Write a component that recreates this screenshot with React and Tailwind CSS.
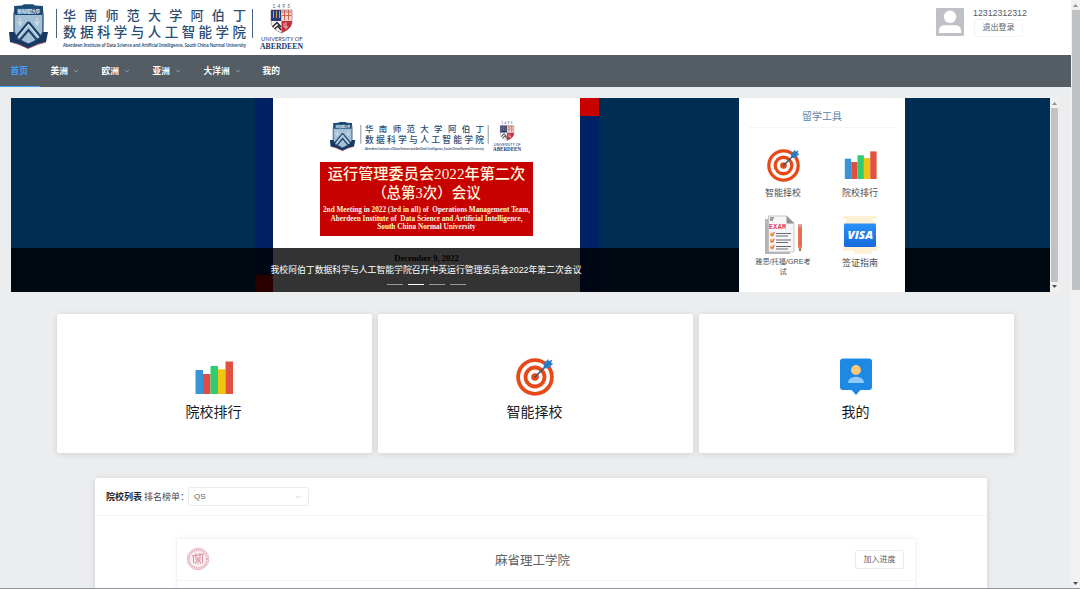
import React from "react";
import { ChevronDown } from "lucide-react";

function Crest() {
  return (
    <g>
      <path d="M9 32 L14 32 L18 39 L28 44 L38 39 L43 32 L48 32 L46 42 L38 44 L28 48.500 L18 44 L10 42 Z" fill="#17395f" />
      <path d="M11 42 L19 44.500 L28 48.500 L38 44.500 L46 42" fill="none" stroke="#a43a4a" strokeWidth="0.7" />
      <path d="M15.500 7 H42 L43 14 V31 C42 37 36 41 28.500 44 C21 41 15 37 14 31 V14 Z" fill="#a3c0d6" stroke="#1c4168" strokeWidth="1.200" />
      <path d="M14 6 L22 5.500 L24 4.300 H33 L35 5.500 L43 6 L42 15 H15 Z" fill="#1b4a75" />
      <text x="17" y="13.200" fontSize="4.500" textLength="23" fill="#dbe8f2" fontWeight="700">華南師範大學</text>
      <path d="M28.500 22 L41 37 M28.500 22 L16 37 M20 40 L28.500 30 L37 40" fill="none" stroke="#1c4168" strokeWidth="2" />
      <path d="M28.500 24.500 L39 38 M28.500 24.500 L18 38 M20 18 V26 M17 21.500 L20 24 L23 21.500 M37 18 V26 M34 21.500 L37 24 L40 21.500" fill="none" stroke="#e2edf4" strokeWidth="0.9" />
    </g>
  );
}

function Shield() {
  return (
    <g>
      <path d="M271 10 H281.500 V21 H271 Z" fill="#253a78" />
      <path d="M281.500 10 H292 V21 H281.500 Z" fill="#f1d9cf" />
      <path d="M271 21 H281.500 V33 C275 30 271 27 271 21 Z" fill="#f4f2ef" />
      <path d="M281.500 21 H292 C292 27 288 30 281.500 33 Z" fill="#c42d3c" />
      <path d="M273.500 11 V18 M276.500 11 V18 M279.500 11 V18" stroke="#d3a34c" strokeWidth="1" />
      <path d="M282 12 H291.500 M282 15.500 H291.500 M284.500 10 V20 M288.500 10 V20" stroke="#cf5a45" strokeWidth="0.9" />
      <path d="M272.500 27 L277 22.500 L281 27 M274.500 29 L278 26 L281 30" fill="none" stroke="#26242b" strokeWidth="1.500" />
      <path d="M284 23 V27 H288 M286 22 V29" stroke="#f5d5d2" strokeWidth="0.8" fill="none" />
      <path d="M271 10 H292 V21 C292 27 288 30 281.500 33 C275 30 271 27 271 21 Z" fill="none" stroke="#7c4053" strokeWidth="0.5" />
    </g>
  );
}

function Brand({ className }) {
  return (
    <svg viewBox="6 0 300 52" className={className} fontFamily="'Noto Sans CJK SC', sans-serif">
      <Crest />
      <path d="M56.500 9 V38 M252.500 9 V38" stroke="#36506e" strokeWidth="0.9" />
      <g fill="#2a4d72" fontWeight="500">
        <text x="63" y="20.200" fontSize="13" textLength="183">华南师范大学阿伯丁</text>
        <text x="63" y="37.200" fontSize="13.500" textLength="183">数据科学与人工智能学院</text>
      </g>
      <text x="63" y="46.800" fontSize="4.300" fontFamily="'Noto Sans', sans-serif" fontWeight="600" textLength="183" fill="#2a4d72">
        Aberdeen Institute of Data Science and Artificial Intelligence, South China Normal University
      </text>
      <Shield />
      <text x="272.500" y="8.300" fontSize="4.800" fontFamily="Lato, sans-serif" textLength="17.500" fill="#44506e">1495</text>
      <text x="261" y="41" fontSize="5.400" fontFamily="Lato, sans-serif" textLength="41.500" lengthAdjust="spacingAndGlyphs" fill="#2b3d73">UNIVERSITY OF</text>
      <text x="260" y="48.500" fontSize="8.600" fontFamily="'Liberation Serif', serif" fontWeight="700" textLength="43" lengthAdjust="spacingAndGlyphs" fill="#243870">ABERDEEN</text>
    </svg>
  );
}

function TargetIcon({ className }) {
  return (
    <svg viewBox="0 0 38 38" className={className}>
      <circle cx="19" cy="19" r="18.800" fill="#e64a19" />
      <circle cx="19" cy="19" r="15" fill="#fff" />
      <circle cx="19" cy="19" r="11.400" fill="#e64a19" />
      <circle cx="19" cy="19" r="7.600" fill="#fff" />
      <circle cx="19" cy="19" r="3.800" fill="#e64a19" />
      <path d="M18.500 19.500 L31 7" stroke="#37566b" strokeWidth="1.600" />
      <path d="M27.500 10.500 L28 5 L32.500 1 L32.800 3.200 L36.500 1.500 L35 5 L37.200 5.500 L33 10 Z" fill="#2f7fc6" />
      <path d="M28 10 L35 3" stroke="#1f5f9f" strokeWidth="0.8" />
    </svg>
  );
}

function BarsIcon({ className }) {
  return (
    <svg viewBox="0 0 38 33" className={className}>
      <path d="M0.500 9 H8 V33 H0.500 Z" fill="#3994d6" />
      <path d="M8 13 H15.500 V33 H8 Z" fill="#e24d42" />
      <path d="M15.500 5 H23 V33 H15.500 Z" fill="#2fcc71" />
      <path d="M23 8.300 H30.500 V33 H23 Z" fill="#f1c40f" />
      <path d="M30.500 0.500 H38 V33 H30.500 Z" fill="#e0523f" />
    </svg>
  );
}

function ExamIcon({ className }) {
  return (
    <svg viewBox="0 0 38 40" className={className}>
      <path d="M1 4 H26 V39 H1 Z" fill="#b5b5b7" />
      <path d="M4.500 1 H23 L30 8 V37 H4.500 Z" fill="#f6f6f8" stroke="#b9b9bd" strokeWidth="0.8" />
      <path d="M22.500 1 V8.500 H30 Z" fill="#8e8e93" />
      <path d="M6 3 H10 M6 5 H9" stroke="#333" strokeWidth="0.9" />
      <text x="5" y="13.500" fontSize="6.500" fontFamily="'Liberation Mono', monospace" fontWeight="700" textLength="17" fill="#e23b52">EXAM</text>
      <path d="M6 17.500 h4 v4 h-4 Z M6 24 h4 v4 h-4 Z M6 30.500 h4 v4 h-4 Z" fill="#f6bd79" />
      <path d="M7 19 l1.200 1.500 l2.500 -3.500 M7 25.500 l1.200 1.500 l2.500 -3.500 M7 32 l1.200 1.500 l2.500 -3.500" fill="none" stroke="#df4c39" strokeWidth="0.9" />
      <path d="M12 18.500 H27 M12 21 H24 M12 25 H27 M12 27.500 H24 M12 31.500 H27 M12 34 H24" stroke="#686a76" strokeWidth="1" />
      <path d="M34 9 H38 V32 L36 36.500 L34 32 Z" fill="#e8785a" />
      <path d="M34 9 H38 V12 H34 Z" fill="#e79a96" />
      <path d="M36 13 V31" stroke="#c95535" strokeWidth="0.7" />
      <path d="M35.200 34.500 L36 36.500 L36.800 34.500 Z" fill="#423633" />
    </svg>
  );
}

function VisaIcon({ className }) {
  return (
    <svg viewBox="0 0 36 40" className={className}>
      <defs>
        <linearGradient id="visaBlue" x1="0" y1="0" x2="0" y2="1">
          <stop offset="0" stopColor="#2c91f6" />
          <stop offset="1" stopColor="#1769dc" />
        </linearGradient>
      </defs>
      <path d="M1 1 H35 V4 H31 V7 H35 V9 H1 V7 H4 V4 H1 Z M1 31 H35 V36 H30 V39 H12 V36 H1 Z" fill="#fdf0d5" />
      <rect x="2" y="8.500" width="32" height="23.500" rx="1.500" fill="url(#visaBlue)" />
      <text x="5.500" y="24" fontSize="10" fontFamily="'Open Sans', sans-serif" fontStyle="italic" fontWeight="800" textLength="25.500" lengthAdjust="spacingAndGlyphs" fill="#fff">VISA</text>
    </svg>
  );
}

function ContactIcon({ className }) {
  return (
    <svg viewBox="0 0 32 38" className={className}>
      <path d="M3 0.500 H29 Q32 0.500 32 3.500 V29 Q32 32 29 32 H20.500 L16 37 L11.500 32 H3 Q0 32 0 29 V3.500 Q0 0.500 3 0.500 Z" fill="#1e88e5" />
      <circle cx="16" cy="12" r="4.900" fill="#ffc876" />
      <path d="M8 25 C8 16.500 24 16.500 24 25 Z" fill="#90caf9" />
    </svg>
  );
}

function Avatar() {
  return (
    <svg viewBox="0 0 28 28" className="h-7 w-7">
      <rect width="28" height="28" rx="1" fill="#c0c1c8" />
      <circle cx="14" cy="8.800" r="6.200" fill="#fff" />
      <path d="M3 25 V23 C3 18.500 6 17.300 9 17.300 H19 C22 17.300 25 18.500 25 23 V25 Z" fill="#fff" />
    </svg>
  );
}

function Seal() {
  return (
    <svg viewBox="0 0 24 24" className="mb-[2px] h-6 w-6">
      <circle cx="12" cy="12" r="10.800" fill="#faeef2" stroke="#e3adba" strokeWidth="0.8" />
      <circle cx="12" cy="12" r="9" fill="none" stroke="#e3adba" strokeWidth="1.800" strokeDasharray="1.200 0.7" />
      <path d="M6 9 L18 7 M7.500 9 V16 M16.500 8 V16 M10 6 V11 M14 6 V11 M9 12 H15 M12 10 V17 M9 17 L11 13 M15 17 L13 13" fill="none" stroke="#d78da0" strokeWidth="1" />
    </svg>
  );
}

function Arrow({ up }) {
  return (
    <svg viewBox="0 0 5 3" className="h-[3px] w-[5px]">
      <path d={up ? "M0 3 L2.500 0 L5 3 Z" : "M0 0 L2.500 3 L5 0 Z"} fill={up ? "#8d8f92" : "#4c4e51"} />
    </svg>
  );
}

const navItems = [
  { label: "首页", width: "w-10 text-[#409eff] border-b border-[#409eff]" },
  { label: "美洲", width: "w-[51px] text-white", menu: true },
  { label: "欧洲", width: "w-[51px] text-white", menu: true },
  { label: "亚洲", width: "w-[51px] text-white", menu: true },
  { label: "大洋洲", width: "w-[59px] text-white", menu: true },
  { label: "我的", width: "w-10 text-white" },
];

function Header() {
  return (
    <header className="flex h-[55px] shrink-0 justify-between bg-white">
      <Brand className="ml-1.5 h-[52px] w-[300px]" />
      <div className="flex w-[135px] gap-[9px] pt-2">
        <Avatar />
        <div className="flex flex-col items-start whitespace-nowrap">
          <span className="h-[10px] text-[8.8px] leading-[11px] text-[#55595f]">12312312312</span>
          <button className="mt-[1px] ml-px flex h-[18px] w-[49px] items-center justify-center rounded-[2px] border border-[#f3f3f5] text-[8px] text-[#606266]">退出登录</button>
        </div>
      </div>
    </header>
  );
}

function Nav() {
  return (
    <nav className="flex h-8 shrink-0 bg-[#545c64]">
      {navItems.map((item) => (
        <div key={item.label} className={"flex items-center pt-[2px] pl-[10.5px] text-[8.7px] font-bold whitespace-nowrap " + item.width}>
          {item.label}
          {item.menu && <ChevronDown className="mb-[3px] ml-1 h-2 w-2 text-[#a8adb2]" strokeWidth={2} />}
        </div>
      ))}
    </nav>
  );
}

function Slide() {
  return (
    <div className="flex h-full w-full bg-[#002d54]">
      <div className="w-[244px]" />
      <div className="flex w-[18px] flex-col bg-[#002163]">
        <div className="mt-auto h-[17px] bg-[#c70000]" />
      </div>
      <div className="flex w-[307px] flex-col items-center bg-white">
        <Brand className="mt-[21px] mr-[3px] h-[34px] w-[195px]" />
        <div className="mt-[9px] flex h-[74px] w-[213px] flex-col items-center bg-[#c70000] font-['Liberation_Serif','Noto_Sans_CJK_SC',serif] whitespace-nowrap text-[#fff6df]">
          <p className="mt-[2px] text-[15.2px] leading-5 font-medium">运行管理委员会2022年第二次</p>
          <p className="text-[14.5px] leading-[19px] font-medium">（总第3次）会议</p>
          <div className="mt-[3px] text-center text-[7.25px] leading-[8.5px] font-bold">
            <p>2nd Meeting in 2022 (3rd in all) of&nbsp; Operations Management Team,</p>
            <p>Aberdeen Institute of&nbsp; Data Science and Artificial Intelligence,</p>
            <p>South China Normal University</p>
          </div>
        </div>
        <p className="mt-[16px] font-['Liberation_Serif',serif] text-[8.5px] leading-3 font-bold text-black">December 9, 2022</p>
      </div>
      <div className="w-[19px] bg-[#002163]">
        <div className="h-[18px] bg-[#c70000]" />
      </div>
    </div>
  );
}

function Tool({ icon, label, small }) {
  return (
    <div className="flex h-[70px] flex-col items-center">
      <div className="flex h-10 items-center">{icon}</div>
      <span className={small ? "mt-0.5 w-[62px] text-center text-[7.2px] leading-[9.5px] text-[#4c4f54]" : "mt-[2px] text-[9px] leading-[13px] text-[#4c4f54]"}>{label}</span>
    </div>
  );
}

function ToolPanel() {
  return (
    <aside className="absolute top-0 left-[728px] h-full w-[166px] bg-white">
      <h2 className="mx-2.5 flex h-[30px] items-center justify-center border-b border-[#f5f5f7] pt-[7px] text-[10px] text-[#5b82b0]">留学工具</h2>
      <div className="mt-[17px] ml-[5.5px] grid grid-cols-[77px_77px]">
        <Tool icon={<TargetIcon className="h-[33px] w-[33px]" />} label="智能择校" />
        <Tool icon={<BarsIcon className="h-7 w-[33px]" />} label="院校排行" />
        <Tool icon={<ExamIcon className="h-10 w-[38px]" />} label={<>雅思/托福/GRE考<br />试</>} small />
        <Tool icon={<VisaIcon className="h-10 w-9" />} label="签证指南" />
      </div>
    </aside>
  );
}

function Carousel() {
  return (
    <section className="mt-[11px] ml-[11px] flex h-[194px] w-[1048px] shrink-0">
      <div className="relative w-[1039px] overflow-hidden">
        <Slide />
        <div className="absolute inset-x-0 bottom-0 flex h-[44px] flex-col items-center bg-black/80 pr-[209px] text-white">
          <p className="mt-[15px] text-[8.84px] leading-[14px] whitespace-nowrap">我校阿伯丁数据科学与人工智能学院召开中英运行管理委员会2022年第二次会议</p>
          <div className="mt-[7px] flex gap-[5px]">
            <i className="h-px w-4 bg-white/50" />
            <i className="h-px w-4 bg-white" />
            <i className="h-px w-4 bg-white/50" />
            <i className="h-px w-4 bg-white/50" />
          </div>
        </div>
        <ToolPanel />
      </div>
      <div className="flex w-[9px] flex-col items-center justify-between bg-[#f1f1f2] py-1">
        <Arrow up />
        <div className="my-[3px] w-[7px] flex-1 bg-[#c0c2c5]" />
        <Arrow />
      </div>
    </section>
  );
}

function Shortcut({ icon, label }) {
  return (
    <div className="flex flex-col items-center rounded-[2px] bg-white pt-[44px] pr-px shadow-[0_1px_6px_rgba(0,0,0,0.12)]">
      <div className="flex h-[38px] items-end">{icon}</div>
      <span className="mt-[6px] text-[14px] leading-5 text-[#16181b]">{label}</span>
    </div>
  );
}

function SchoolList() {
  return (
    <section className="mt-[25px] ml-[95px] w-[892px] flex-1 rounded-t-[2px] bg-white shadow-[0_1px_6px_rgba(0,0,0,0.12)]">
      <div className="flex h-[38px] items-center border-b border-[#f3f4f6] pl-[11px] text-[9px] text-[#45484d]">
        <b className="pt-0.5 text-[#25272b]">院校列表</b>
        <span className="ml-[2px] pt-0.5">排名榜单：</span>
        <div className="-ml-px flex h-[19px] w-[121px] items-center justify-between rounded-[2px] border border-[#eaecf0] pr-1.5 pl-[5px] text-[8px] text-[#606266]">
          QS
          <ChevronDown className="h-2 w-2 text-[#c0c4cc]" strokeWidth={2} />
        </div>
      </div>
      <div className="mt-[22px] ml-[81px] h-20 w-[740px] border border-[#f4f4f6] bg-white shadow-[0_0_8px_rgba(0,0,0,0.04)]">
        <div className="grid h-[42px] grid-cols-[1fr_auto_1fr] items-center border-b border-[#f5f5f7] pr-[11px] pl-[9px]">
          <Seal />
          <h3 className="mr-[25px] pt-[3px] text-[12.5px] text-[#5c5f64]">麻省理工学院</h3>
          <button className="flex h-[19px] w-[49px] items-center justify-center justify-self-end rounded-[2px] border border-[#ececf0] text-[8px] text-[#606266]">加入进度</button>
        </div>
      </div>
    </section>
  );
}

export default function App() {
  return (
    <div className="flex h-[589px] w-[1080px] flex-col overflow-hidden bg-[#ecedef] font-['Liberation_Sans','Noto_Sans_CJK_SC',sans-serif]">
      <div className="flex h-[588px] shrink-0">
        <main className="flex w-[1071px] flex-col overflow-hidden">
          <Header />
          <Nav />
          <Carousel />
          <section className="mt-[22px] ml-[56.5px] grid h-[139px] w-[957px] shrink-0 grid-cols-3 gap-[6px]">
            <Shortcut icon={<BarsIcon className="mb-[2px] h-[33px] w-[38px]" />} label="院校排行" />
            <Shortcut icon={<TargetIcon className="h-[38px] w-[38px]" />} label="智能择校" />
            <Shortcut icon={<ContactIcon className="h-[38px] w-8" />} label="我的" />
          </section>
          <SchoolList />
        </main>
        <div className="flex w-[9px] flex-col items-center justify-between bg-[#f1f1f2] pt-1 pb-[3px]">
          <Arrow up />
          <div className="mt-[3px] mb-auto h-[280px] w-[8px] bg-[#c0c1c3]" />
          <Arrow />
        </div>
      </div>
      <div className="h-px shrink-0 bg-[#939498]" />
    </div>
  );
}
